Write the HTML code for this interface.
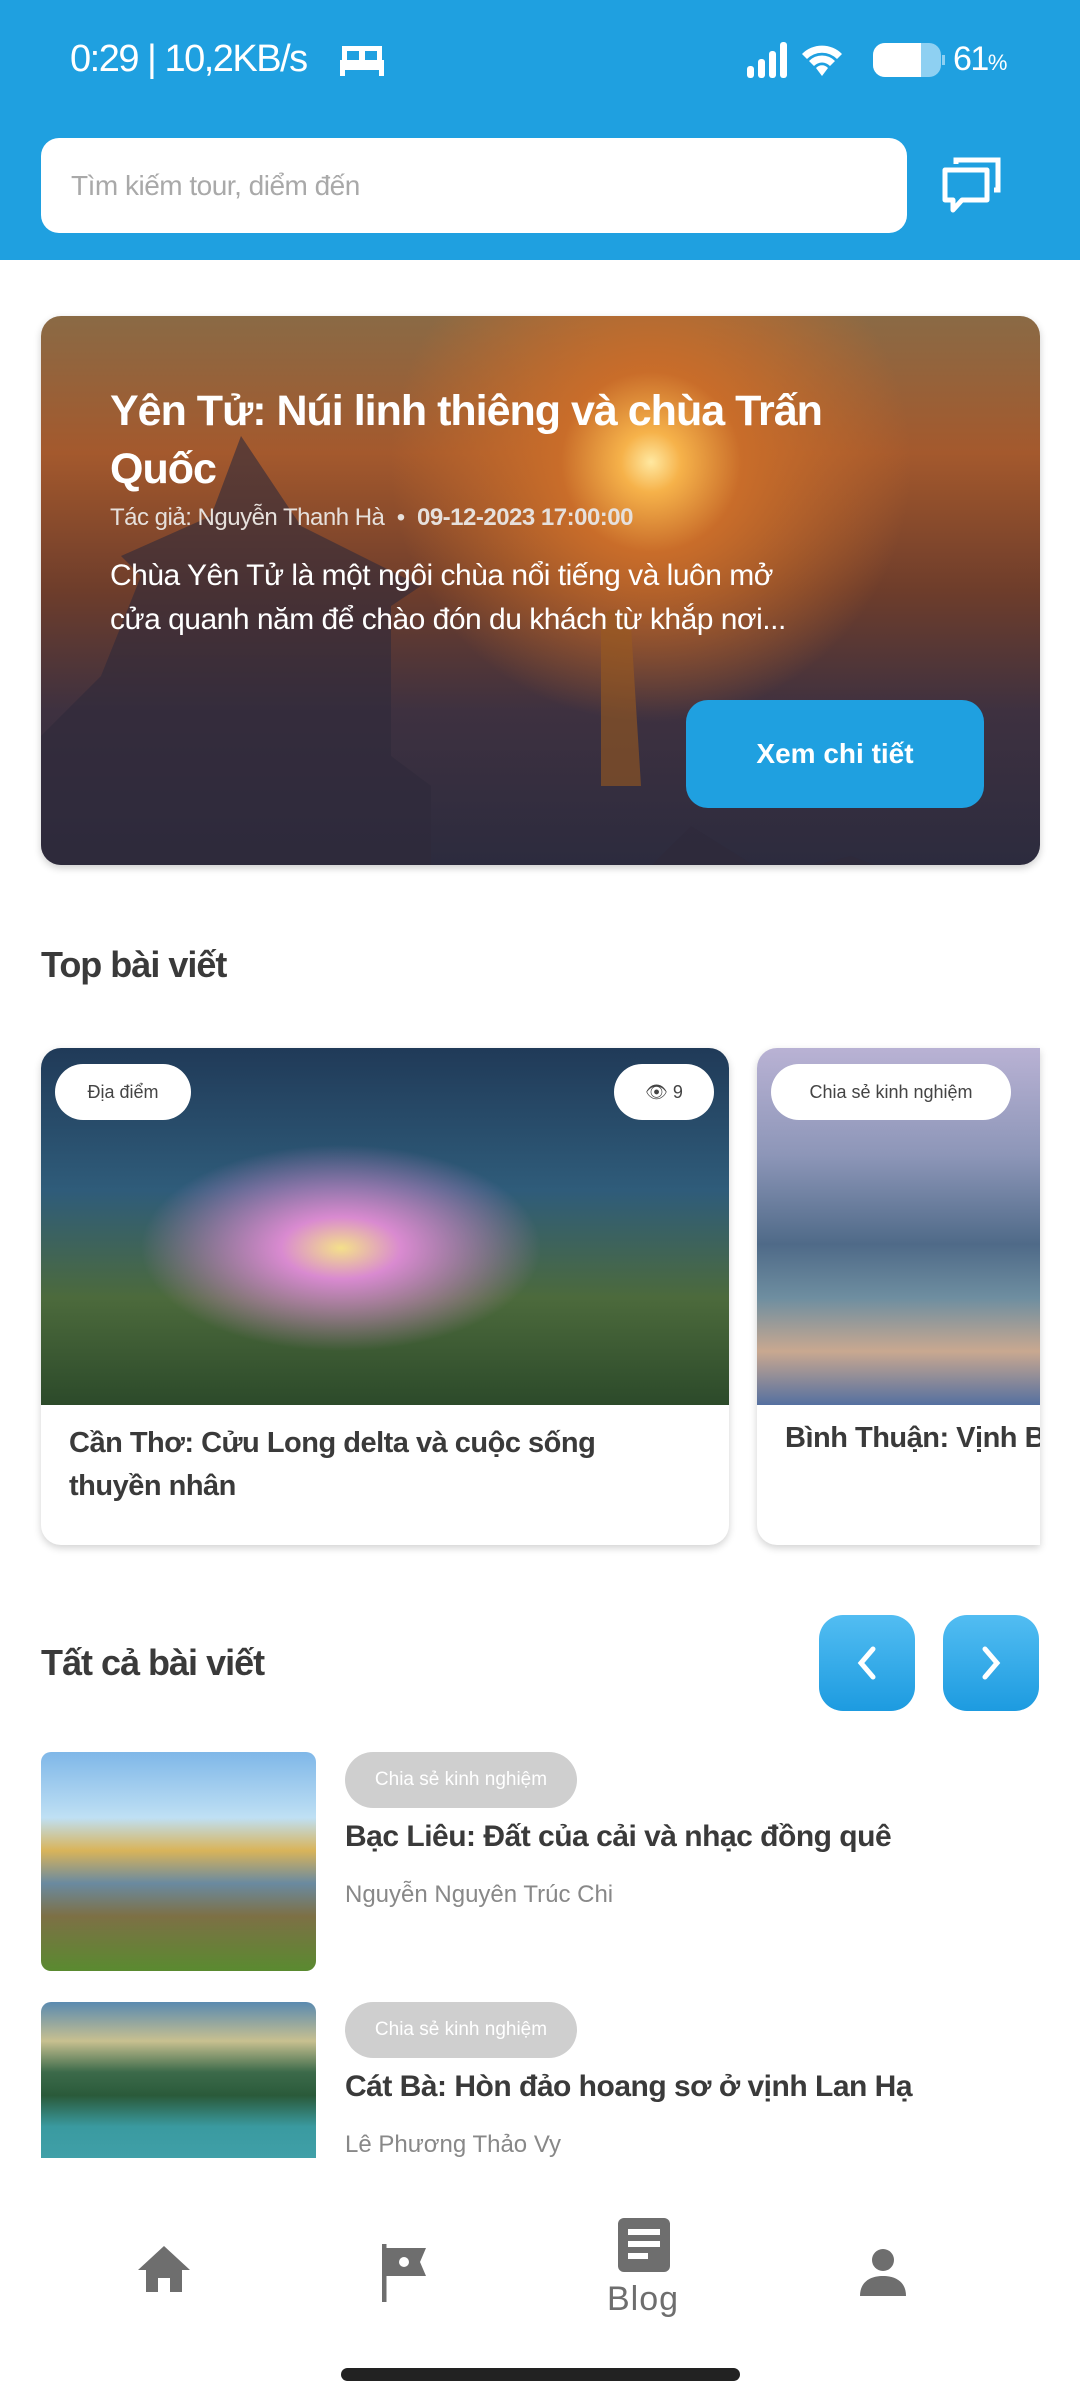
<!DOCTYPE html>
<html><head><meta charset="utf-8"><style>
*{margin:0;padding:0;box-sizing:border-box}
body{width:1080px;height:2400px;background:#fff;font-family:"Liberation Sans",sans-serif;position:relative;overflow:hidden;color:#3a3a3a}
.a{position:absolute}
.top{left:0;top:0;width:1080px;height:260px;background:#1fa0e0}
.sb{color:#fff;font-size:38px;top:38px;letter-spacing:-1.5px}
.search{left:41px;top:138px;width:866px;height:95px;background:#fff;border-radius:18px;color:#a9a9a9;font-size:28px;line-height:95px;padding-left:30px;letter-spacing:-0.5px}
.hero{left:41px;top:316px;width:999px;height:549px;border-radius:20px;overflow:hidden;background:radial-gradient(circle at 610px 146px,#ffe8a0 0,#f6b24a 30px,#c96d2a 90px,rgba(150,80,40,0) 260px),linear-gradient(180deg,#8a6a45 0%,#a4592d 25%,#6e3d2b 50%,#3e3140 72%,#2c2b3e 100%);box-shadow:0 3px 8px rgba(0,0,0,.2)}
.w{color:#fff}
.card{border-radius:20px;background:#fff;box-shadow:0 3px 8px rgba(0,0,0,.18);overflow:hidden}
.pill{background:#fff;border-radius:28px;font-size:18px;color:#444;text-align:center}
.gp{background:#cfcfcf;border-radius:28px;color:#fff;font-size:19px;text-align:center;line-height:56px}
.btn{width:96px;height:96px;border-radius:24px;background:linear-gradient(180deg,#52bdf2,#1d9be0)}
</style></head><body>
<div class="a top"></div>
<div class="a sb" style="left:70px">0:29 | 10,2KB/s</div>
<svg class="a" style="left:338px;top:42px" width="48" height="36" viewBox="0 0 48 36"><path d="M4 4h40v14H4z M2 18h44v10H2z M2 28h5v6H2z M41 28h5v6h-5z" fill="#fff"/><path d="M9 9h12v9H9zM27 9h12v9H27z" fill="#1fa0e0"/></svg>
<svg class="a" style="left:745px;top:40px" width="270" height="40" viewBox="0 0 270 40"><rect x="2" y="26" width="7" height="12" rx="3" fill="#fff"/><rect x="13" y="19" width="7" height="19" rx="3" fill="#fff"/><rect x="24" y="11" width="7" height="27" rx="3" fill="#fff"/><rect x="35" y="2" width="7" height="36" rx="3" fill="#fff"/><path d="M57 14a28 28 0 0 1 40 0l-5 5a21 21 0 0 0-30 0zM64 21a18 18 0 0 1 26 0l-5 5a11 11 0 0 0-16 0zM71 28a8 8 0 0 1 12 0l-6 8z" fill="#fff"/><rect x="128" y="3" width="68" height="34" rx="12" fill="#8ed0f2"/><path d="M140 3h36v34h-36a12 12 0 0 1-12-12v-10a12 12 0 0 1 12-12z" fill="#fff"/><rect x="197" y="15" width="3" height="10" fill="#8ed0f2"/></svg>
<div class="a sb" style="left:953px;top:40px;font-size:34px">61<span style="font-size:22px">%</span></div>
<div class="a search">Tìm kiếm tour, diểm đến</div>
<svg class="a" style="left:940px;top:156px" width="64" height="58" viewBox="0 0 64 58"><path d="M16 8V4h42v30h-4" fill="none" stroke="#fff" stroke-width="5"/><path d="M5 14h42v30H22l-9 10v-10H5z" fill="none" stroke="#fff" stroke-width="5" stroke-linejoin="round"/></svg>

<div class="a hero">
<svg class="a" style="left:0;top:0" width="999" height="549"><path d="M0 549V420l60-60 40-100-20-20 90-40 30-80 60 90 120 60-30 20v150l40 30v100l200 0 60-60 80 50 80-20 80 30v80z" fill="#2e2a3a" opacity=".6"/><path d="M560 300c10-10 30-10 30 10l10 160h-40z" fill="#9a5a20" opacity=".6"/></svg>
<div class="a w" style="left:69px;top:66px;font-size:43px;font-weight:bold;line-height:58px;width:800px;letter-spacing:-1px">Yên Tử: Núi linh thiêng và chùa Trấn Quốc</div>
<div class="a" style="left:69px;top:188px;font-size:24px;color:#e6e0dc;letter-spacing:-0.5px">Tác giả: Nguyễn Thanh Hà &nbsp;•&nbsp; <b>09-12-2023 17:00:00</b></div>
<div class="a w" style="left:69px;top:238px;font-size:30px;line-height:44px;width:720px;letter-spacing:-0.5px">Chùa Yên Tử là một ngôi chùa nổi tiếng và luôn mở cửa quanh năm để chào đón du khách từ khắp nơi...</div>
<div class="a w" style="left:645px;top:384px;width:298px;height:108px;border-radius:22px;background:#1fa0e0;font-size:28px;text-align:center;line-height:108px;font-weight:bold">Xem chi tiết</div>
</div>

<div class="a" style="left:41px;top:944px;font-size:36px;font-weight:bold;letter-spacing:-1px">Top bài viết</div>
<div class="a card" style="left:41px;top:1048px;width:688px;height:497px">
<div class="a" style="left:0;top:0;width:688px;height:357px;background:radial-gradient(ellipse at 300px 200px,#f4e08a 0,#d98ad0 60px,rgba(60,90,140,0) 200px),linear-gradient(180deg,#203a58 0%,#2f5c7a 40%,#4c6a3c 70%,#2c4a2a 100%)"></div>
<div class="a pill" style="left:14px;top:16px;width:136px;height:56px;line-height:56px">Địa điểm</div>
<div class="a pill" style="left:573px;top:16px;width:100px;height:56px;line-height:56px">👁 9</div>
<div class="a" style="left:28px;top:374px;font-size:29px;line-height:43px;font-weight:bold;width:620px;letter-spacing:-0.5px">Cần Thơ: Cửu Long delta và cuộc sống thuyền nhân</div>
</div>
<div class="a card" style="left:757px;top:1048px;width:283px;height:497px;border-radius:20px 0 0 20px">
<div class="a" style="left:0;top:0;width:300px;height:357px;background:linear-gradient(180deg,#b9b2d4 0%,#8d96b8 30%,#4f6a88 55%,#6e8ea0 70%,#c9a890 85%,#5570a0 100%)"></div>
<div class="a pill" style="left:14px;top:16px;width:240px;height:56px;line-height:56px">Chia sẻ kinh nghiệm</div>
<div class="a" style="left:28px;top:374px;font-size:29px;font-weight:bold;white-space:nowrap;letter-spacing:-0.5px">Bình Thuận: Vịnh Bình</div>
</div>

<div class="a" style="left:41px;top:1642px;font-size:36px;font-weight:bold;letter-spacing:-1px">Tất cả bài viết</div>
<div class="a btn" style="left:819px;top:1615px"><svg width="96" height="96"><path d="M54 34L42 48l12 14" fill="none" stroke="#fff" stroke-width="5" stroke-linecap="round"/></svg></div>
<div class="a btn" style="left:943px;top:1615px"><svg width="96" height="96"><path d="M42 34l12 14-12 14" fill="none" stroke="#fff" stroke-width="5" stroke-linecap="round"/></svg></div>

<div class="a" style="left:41px;top:1752px;width:275px;height:219px;border-radius:10px;background:linear-gradient(180deg,#7fb7e8 0%,#bfe0f4 30%,#d9b45a 45%,#6a8aa0 60%,#7d7045 75%,#5a8a30 100%)"></div>
<div class="a gp" style="left:345px;top:1752px;width:232px">Chia sẻ kinh nghiệm</div>
<div class="a" style="left:345px;top:1820px;font-size:30px;font-weight:bold;letter-spacing:-0.5px">Bạc Liêu: Đất của cải và nhạc đồng quê</div>
<div class="a" style="left:345px;top:1881px;font-size:24px;color:#888">Nguyễn Nguyên Trúc Chi</div>

<div class="a" style="left:41px;top:2002px;width:275px;height:156px;border-radius:10px 10px 0 0;background:linear-gradient(180deg,#5a8ab0 0%,#c8c090 25%,#3c6a4a 45%,#2a5a3a 60%,#3a9aa0 80%,#40a0a8 100%)"></div>
<div class="a gp" style="left:345px;top:2002px;width:232px">Chia sẻ kinh nghiệm</div>
<div class="a" style="left:345px;top:2070px;font-size:30px;font-weight:bold;letter-spacing:-0.5px">Cát Bà: Hòn đảo hoang sơ ở vịnh Lan Hạ</div>
<div class="a" style="left:345px;top:2131px;font-size:24px;color:#888">Lê Phương Thảo Vy</div>

<div class="a" style="left:0;top:2158px;width:1080px;height:242px;background:#fff"></div>
<svg class="a" style="left:136px;top:2244px" width="56" height="50" viewBox="0 0 56 50"><path d="M28 2L2 26h8v22h12V34h12v14h12V26h8z" fill="#6e6e6e"/></svg>
<svg class="a" style="left:382px;top:2242px" width="48" height="62" viewBox="0 0 48 62"><path d="M2 2v58" stroke="#6e6e6e" stroke-width="5"/><path d="M4 6h40l-6 14 6 14H4z" fill="#6e6e6e"/><circle cx="22" cy="20" r="5" fill="#fff"/></svg>
<svg class="a" style="left:618px;top:2218px" width="52" height="54" viewBox="0 0 52 54"><rect x="0" y="0" width="52" height="54" rx="6" fill="#6e6e6e"/><path d="M10 14h32M10 26h32M10 38h20" stroke="#fff" stroke-width="6"/></svg>
<div class="a" style="left:607px;top:2280px;font-size:34px;color:#6e6e6e;letter-spacing:1px">Blog</div>
<svg class="a" style="left:860px;top:2248px" width="46" height="48" viewBox="0 0 46 48"><circle cx="23" cy="12" r="11" fill="#6e6e6e"/><path d="M0 48c0-14 10-20 23-20s23 6 23 20z" fill="#6e6e6e"/></svg>
<div class="a" style="left:341px;top:2368px;width:399px;height:13px;border-radius:7px;background:#222"></div>
</body></html>
